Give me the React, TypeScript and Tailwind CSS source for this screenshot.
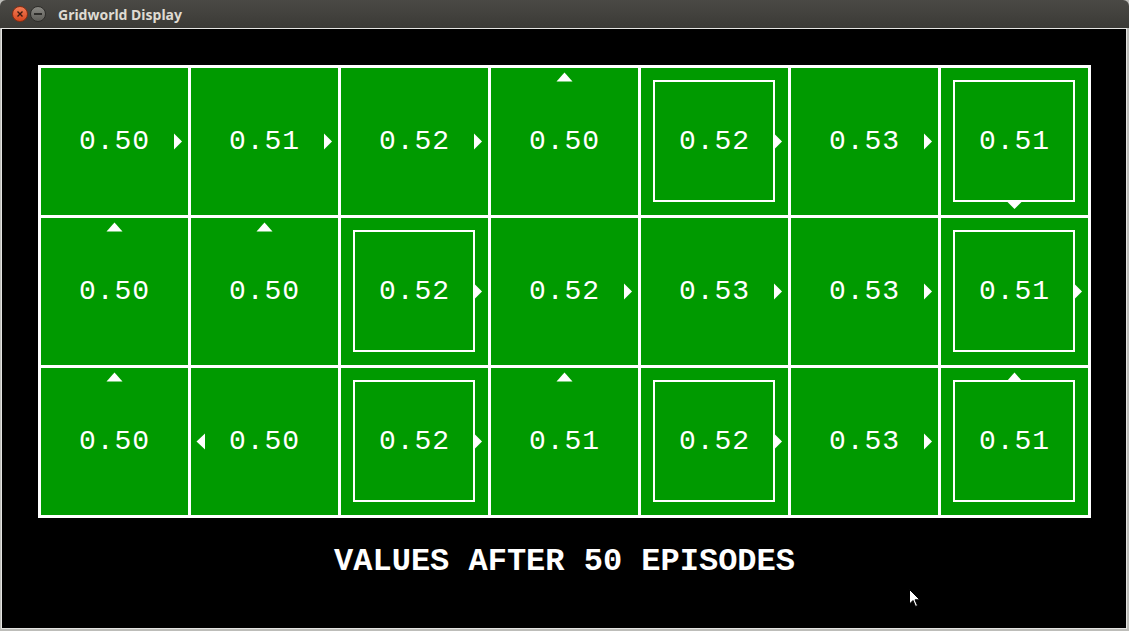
import React from "react";

type Dir = "r" | "l" | "u" | "d";
type Cell = { v: string; a: Dir; sq?: boolean };

const rows: Cell[][] = [
  [
    { v: "0.50", a: "r" },
    { v: "0.51", a: "r" },
    { v: "0.52", a: "r" },
    { v: "0.50", a: "u" },
    { v: "0.52", a: "r", sq: true },
    { v: "0.53", a: "r" },
    { v: "0.51", a: "d", sq: true },
  ],
  [
    { v: "0.50", a: "u" },
    { v: "0.50", a: "u" },
    { v: "0.52", a: "r", sq: true },
    { v: "0.52", a: "r" },
    { v: "0.53", a: "r" },
    { v: "0.53", a: "r" },
    { v: "0.51", a: "r", sq: true },
  ],
  [
    { v: "0.50", a: "u" },
    { v: "0.50", a: "l" },
    { v: "0.52", a: "r", sq: true },
    { v: "0.51", a: "u" },
    { v: "0.52", a: "r", sq: true },
    { v: "0.53", a: "r" },
    { v: "0.51", a: "u", sq: true },
  ],
];

const C = 73.5;
const arrowPts: Record<Dir, string> = {
  r: `${C + 59.5},${C - 8} ${C + 67.5},${C} ${C + 59.5},${C + 8}`,
  l: `${C - 59.5},${C - 8} ${C - 68},${C} ${C - 59.5},${C + 8}`,
  u: `${C - 8},${C - 60} ${C},${C - 69} ${C + 8},${C - 60}`,
  d: `${C - 8},${C + 59.5} ${C},${C + 67.5} ${C + 8},${C + 59.5}`,
};

function GridCell({ c }: { c: Cell }) {
  return (
    <div className="relative w-[147px] h-[147px] bg-[#009a00] flex items-center justify-center">
      <svg className="absolute inset-0" width="147" height="147" viewBox="0 0 147 147">
        {c.sq && (
          <rect x="13" y="13" width="120" height="120" fill="none" stroke="#ffffff" strokeWidth="2" />
        )}
        <polygon points={arrowPts[c.a]} fill="#ffffff" />
      </svg>
      <span
        className="relative mt-[1px] text-white text-[28px] leading-none tracking-[1px]"
        style={{ fontFamily: '"Liberation Mono", monospace' }}
      >
        {c.v}
      </span>
    </div>
  );
}

export default function App() {
  return (
    <div className="relative w-[1129px] h-[631px] bg-[#bdbdb9] flex flex-col overflow-hidden">
      {/* Title bar */}
      <div className="h-[28px] shrink-0 bg-gradient-to-b from-[#4a4945] to-[#3b3a36] rounded-t-[6px] flex items-center">
        <div className="ml-[12px] w-[16px] h-[16px] rounded-full bg-gradient-to-b from-[#f27c55] to-[#d8461c] border border-[#8a2d12] flex items-center justify-center">
          <svg width="8" height="8" viewBox="0 0 8 8">
            <path d="M1.5 1.5 L6.5 6.5 M6.5 1.5 L1.5 6.5" stroke="#3a1a10" strokeWidth="1.4" />
          </svg>
        </div>
        <div className="ml-[2px] w-[16px] h-[16px] rounded-full bg-gradient-to-b from-[#8a8984] to-[#5e5d58] border border-[#2e2d2a] flex items-center justify-center">
          <div className="w-[8px] h-[2px] bg-[#2e2d2a]" />
        </div>
        <span
          className="ml-[12px] text-[14px] font-bold text-[#dfdbd2]"
          style={{ fontFamily: '"Noto Sans", "DejaVu Sans", sans-serif' }}
        >
          Gridworld Display
        </span>
      </div>

      {/* Content */}
      <div className="flex-1 ml-[1px] mr-[2px] mb-[2px] border border-[#e4e4e2] bg-black flex flex-col pt-[36px] pl-[36px]">
        <div className="w-[1053px] bg-white p-[3px] grid grid-cols-7 gap-[3px]">
          {rows.flat().map((c, i) => (
            <GridCell key={i} c={c} />
          ))}
        </div>
        <div
          className="w-[1053px] mt-[26px] text-center text-white font-bold text-[32px] leading-[36px]"
          style={{ fontFamily: '"Liberation Mono", "Courier New", monospace' }}
        >
          VALUES AFTER 50 EPISODES
        </div>
      </div>

      {/* Mouse cursor */}
      <svg className="absolute left-[909px] top-[589px]" width="12" height="19" viewBox="0 0 12 19">
        <path d="M0.5 0.5 L0.5 15 L4 11.5 L6.5 17.5 L8.5 16.5 L6 10.8 L10.8 10.8 Z" fill="#ffffff" stroke="#000000" strokeWidth="1" />
      </svg>
    </div>
  );
}
